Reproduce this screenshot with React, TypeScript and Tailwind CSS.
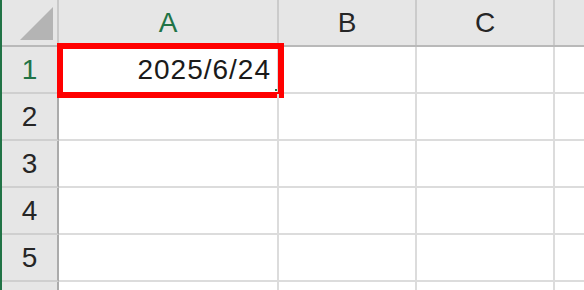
import React from "react";

const rows = [1, 2, 3, 4, 5, 6];

export default function App() {
  return (
    <div
      className="w-[584px] h-[290px] overflow-hidden bg-white border-l-2 border-[#217346] flex flex-col"
      style={{ fontFamily: '"Liberation Sans", Arial, sans-serif' }}
    >
      {/* header row */}
      <div className="flex h-[47px] shrink-0 bg-[#e6e6e6] border-b-2 border-[#b9b9b9]">
        <div className="w-[57px] shrink-0 border-r-2 border-[#c9c9c9] relative">
          <svg className="absolute left-0 top-0" width="55" height="45" viewBox="0 0 55 45">
            <polygon points="18,40 51,7 51,40" fill="#b4b4b4" />
          </svg>
        </div>
        <div className="w-[220px] shrink-0 border-r-2 border-[#cbcbcb] flex items-center justify-center text-[28px] text-[#217346]">
          A
        </div>
        <div className="w-[138px] shrink-0 border-r-2 border-[#cbcbcb] flex items-center justify-center text-[28px] text-[#262626]">
          B
        </div>
        <div className="w-[138px] shrink-0 border-r-2 border-[#cbcbcb] flex items-center justify-center text-[28px] text-[#262626]">
          C
        </div>
        <div className="flex-1" />
      </div>
      {rows.map((r) => (
        <div key={r} className="flex h-[47px] shrink-0">
          <div
            className={`w-[57px] shrink-0 bg-[#e6e6e6] border-r-2 border-[#ababab] border-b-2 border-b-[#cfcfcf] flex items-center justify-center text-[28px] ${
              r === 1 ? "text-[#217346]" : "text-[#262626]"
            }`}
          >
            {r < 6 ? r : null}
          </div>
          <div className="w-[220px] shrink-0 border-r-2 border-b-2 border-[#dcdcdc] relative flex items-center justify-end pr-[6px] text-[28px] tracking-[1px] text-[#1a1a1a]">
            {r === 1 && (
              <>
                <span>2025/6/24</span>
                <div className="absolute left-[-2px] top-[-4px] w-[227px] h-[55px] border-[6px] border-[#ff0000]">
                  <div className="absolute right-[1px] bottom-[1px] w-[2px] h-[2px] bg-[#217346]" />
                </div>
              </>
            )}
          </div>
          <div className="w-[138px] shrink-0 border-r-2 border-b-2 border-[#dcdcdc]" />
          <div className="w-[138px] shrink-0 border-r-2 border-b-2 border-[#dcdcdc]" />
          <div className="flex-1 border-b-2 border-[#dcdcdc]" />
        </div>
      ))}
    </div>
  );
}
